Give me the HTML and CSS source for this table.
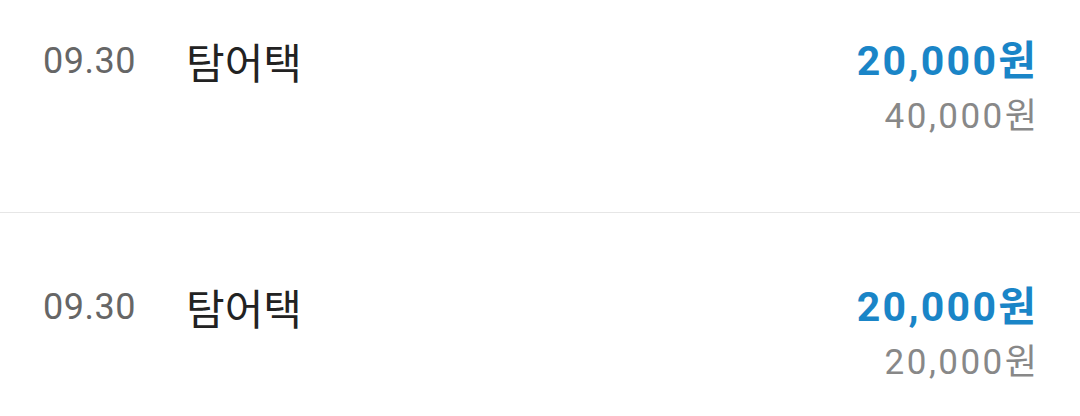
FILE: index.html
```html
<!DOCTYPE html>
<html lang="ko">
<head>
    <meta charset="UTF-8">
    <meta name="viewport" content="width=device-width, initial-scale=1.0">
    <title>사용 내역</title>
    <link rel="stylesheet" href="styles.css">
</head>
<body>
    <ul class="history-list">
        <li class="history-item">
            <span class="history-date">09.30</span>
            <span class="history-title">탐어택</span>
            <div class="history-amount">
                <span class="amount-main">20,000원</span>
                <span class="amount-sub">40,000원</span>
            </div>
        </li>
        <li class="history-item">
            <span class="history-date">09.30</span>
            <span class="history-title">탐어택</span>
            <div class="history-amount">
                <span class="amount-main">20,000원</span>
                <span class="amount-sub">20,000원</span>
            </div>
        </li>
    </ul>
</body>
</html>
```

FILE: styles.css
```css
body {
    margin: 0;
    background-color: #fff;
    font-family: Roboto, "Noto Sans CJK KR", sans-serif;
    overflow: hidden;
}

.history-list {
    list-style: none;
    margin: -33px 0 0 0; /* 첫 줄 위쪽은 화면 밖 */
    padding: 0;
}

.history-item {
    display: flex;
    align-items: flex-start;
    padding: 66px 42px 67px 43px;
    border-bottom: 1px solid #e6e6e6;
}

.history-date {
    width: 143px;
    flex-shrink: 0;
    font-size: 36px;
    line-height: 56px;
    letter-spacing: 0.5px;
    color: #666;
}

.history-title {
    flex-grow: 1;
    font-size: 42px;
    line-height: 56px;
    color: #222;
    font-family: "Noto Sans CJK KR", sans-serif;
}

.history-amount {
    display: flex;
    flex-direction: column;
    align-items: flex-end;
}

.amount-main {
    font-size: 41px;
    line-height: 56px;
    font-weight: bold;
    letter-spacing: 2.3px;
    margin-right: -0.3px;
    color: #1a85c7;
}

.amount-sub {
    font-size: 35px;
    line-height: 56px;
    letter-spacing: 2.5px;
    margin-right: -1.5px;
    color: #888;
}
```
